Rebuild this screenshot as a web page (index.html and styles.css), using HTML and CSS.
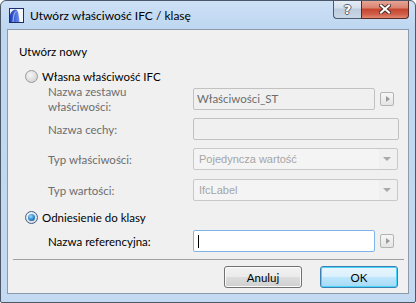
FILE: index.html
```html
<!DOCTYPE html>
<html lang="pl">
<head>
    <meta charset="UTF-8">
    <meta name="viewport" content="width=device-width, initial-scale=1.0">
    <title>Utwórz właściwość IFC / klasę</title>
    <link rel="stylesheet" href="styles.css">
</head>
<body>
    <div class="window">
        <div class="titlebar">
            <svg class="app-icon" width="15" height="15" viewBox="0 0 15 15">
                <defs>
                    <linearGradient id="sail" x1="0" y1="0" x2="1" y2="0">
                        <stop offset="0" stop-color="#1c3fb8"/>
                        <stop offset="1" stop-color="#6f8ff0"/>
                    </linearGradient>
                </defs>
                <rect x="0.5" y="0.5" width="14" height="14" fill="#f4f6fb" stroke="#1d2c6b"/>
                <path d="M1 14 L1 7 Q2.5 1.5 7 1.5 Q9.5 1.8 10.5 14 Z" fill="url(#sail)"/>
                <path d="M4 14 Q4.5 5 7.2 3.2" stroke="#c9d6ff" stroke-width="0.8" fill="none"/>
            </svg>
            <span class="title">Utwórz właściwość IFC / klasę</span>
            <div class="caption-buttons">
                <div class="cap-btn help">?</div>
                <div class="cap-btn close">
                    <svg width="12" height="10" viewBox="0 0 12 10">
                        <path d="M2 1.5 L10 8.5 M10 1.5 L2 8.5" stroke="#4a3030" stroke-width="4" stroke-linecap="square"/>
                        <path d="M2 1.5 L10 8.5 M10 1.5 L2 8.5" stroke="#ffffff" stroke-width="2" stroke-linecap="square"/>
                    </svg>
                </div>
            </div>
        </div>

        <div class="client">
            <div class="group-title">Utwórz nowy</div>

            <div class="radio-row">
                <span class="radio"></span>
                <span>Własna właściwość IFC</span>
            </div>

            <div class="field first">
                <div class="field-label">Nazwa zestawu<br>właściwości:</div>
                <div class="textbox short">Właściwości_ST</div>
                <div class="more-btn"><span class="tri"></span></div>
            </div>

            <div class="field">
                <div class="field-label">Nazwa cechy:</div>
                <div class="textbox wide"></div>
            </div>

            <div class="field">
                <div class="field-label">Typ właściwości:</div>
                <div class="dropdown">
                    <span>Pojedyncza wartość</span>
                    <span class="drop-arrow"></span>
                </div>
            </div>

            <div class="field last">
                <div class="field-label">Typ wartości:</div>
                <div class="dropdown">
                    <span>IfcLabel</span>
                    <span class="drop-arrow"></span>
                </div>
            </div>

            <div class="radio-row second">
                <span class="radio checked"></span>
                <span>Odniesienie do klasy</span>
            </div>

            <div class="field ref">
                <div class="field-label active">Nazwa referencyjna:</div>
                <div class="textbox short focused"><span class="caret"></span></div>
                <div class="more-btn"><span class="tri"></span></div>
            </div>

            <div class="separator"></div>

            <div class="buttons">
                <div class="btn">Anuluj</div>
                <div class="btn default">OK</div>
            </div>
        </div>
    </div>
</body>
</html>
```

FILE: styles.css
```css
body {
    margin: 0;
    background-color: #fff;
    font-family: "Segoe UI", Lato, "Liberation Sans", sans-serif;
    font-size: 11.5px;
    color: #000;
}
.window {
    width: 414px;
    height: 301px;
    border: 1px solid #4c5868;
    border-radius: 6px 6px 2px 2px;
    background: linear-gradient(#cde1f6, #bed6f0 28px, #c4daf2);
    display: flex;
    flex-direction: column;
    overflow: hidden;
}
.titlebar {
    height: 28px;
    display: flex;
    align-items: center;
}
.app-icon {
    margin-left: 8px;
    margin-top: 1px;
}
.title {
    margin-left: 6px;
    font-size: 12px;
    color: #000;
}
.caption-buttons {
    margin-left: auto;
    margin-right: 6px;
    align-self: flex-start;
    margin-top: -1px;
    display: flex;
}
.cap-btn {
    height: 18px;
    border: 1px solid #4a5a6e;
    border-top: none;
    display: flex;
    align-items: center;
    justify-content: center;
}
.help {
    width: 27px;
    border-radius: 0 0 0 4px;
    border-right: none;
    background: linear-gradient(#e8eef6, #d3dfec 45%, #bccbdc 50%, #c9d7e6);
    color: #fff;
    font-family: "DejaVu Sans", sans-serif;
    font-weight: bold;
    font-size: 13px;
    text-shadow: -1px 0 #56606c, 1px 0 #56606c, 0 -1px #56606c, 0 1px #56606c;
}
.close {
    width: 46px;
    border-radius: 0 0 4px 0;
    border-color: #5a2a24;
    background: linear-gradient(#e9a99b, #d9826f 45%, #c7432d 50%, #d0604b 80%, #e08a70);
}

.client {
    margin: 0 6px;
    height: 263px;
    border: 1px solid #8d9aab;
    background-color: #f0f0f0;
}
.group-title {
    margin: 14px 0 0 11px;
    line-height: 16px;
}
.radio-row {
    margin-top: 8px;
    padding-left: 17px;
    height: 16px;
    display: flex;
    align-items: center;
}
.radio-row.second {
    margin-top: 8px;
}
.radio {
    width: 11px;
    height: 11px;
    border: 1px solid #9a9a9a;
    border-radius: 50%;
    margin-right: 4px;
    background: radial-gradient(circle at 40% 35%, #f6f6f6, #dedede 55%, #c9c9c9);
    display: flex;
    align-items: center;
    justify-content: center;
}
.radio.checked {
    border-color: #3f5f86;
    background: radial-gradient(circle at 40% 35%, #fbfbfb, #e3e3e3 60%, #cfcfcf);
}
.radio.checked::after {
    content: "";
    width: 7px;
    height: 7px;
    border-radius: 50%;
    background: radial-gradient(circle at 40% 35%, #9fdcff, #2d8ed6 50%, #0c3f7a);
}

.field {
    margin-top: 8px;
    padding-left: 40px;
    height: 22px;
    display: flex;
    align-items: center;
}
.field.first {
    margin-top: 4px;
}
.field.last {
    margin-top: 9px;
}
.field.ref {
    margin-top: 5px;
}
.field-label {
    width: 145px;
    flex-shrink: 0;
    line-height: 15px;
    color: #6d6d6d;
}
.field-label.active {
    color: #000;
}
.textbox {
    height: 20px;
    border: 1px solid #c2c2c2;
    border-radius: 2px;
    background-color: #f0f0f0;
    padding-left: 3px;
    line-height: 20px;
    color: #6d6d6d;
    box-sizing: content-box;
}
.textbox.short {
    width: 177px;
}
.textbox.wide {
    width: 201px;
}
.textbox.focused {
    background-color: #fff;
    border-color: #7eb4ea;
    display: flex;
    align-items: center;
}
.caret {
    width: 1px;
    height: 13px;
    background-color: #000;
    margin-left: 1px;
}
.more-btn {
    width: 12px;
    height: 12px;
    margin-left: 5px;
    border: 1px solid #b3b3b3;
    border-radius: 2px;
    background: linear-gradient(#f7f7f7, #e4e4e4);
    display: flex;
    align-items: center;
    justify-content: center;
}
.tri {
    width: 0;
    height: 0;
    margin-left: 1px;
    border-top: 3px solid transparent;
    border-bottom: 3px solid transparent;
    border-left: 4px solid #9a9a9a;
}
.dropdown {
    width: 198px;
    height: 20px;
    border: 1px solid #c8c8c8;
    border-radius: 2px;
    background: linear-gradient(90deg, #f4f4f4 185px, #f0f0f0 185px);
    padding-left: 5px;
    display: flex;
    align-items: center;
    font-family: "Liberation Sans", Arial, sans-serif;
    font-size: 11px;
    color: #a5a5a5;
    box-sizing: content-box;
}
.drop-arrow {
    margin-left: auto;
    margin-right: 6px;
    width: 0;
    height: 0;
    border-left: 4px solid transparent;
    border-right: 4px solid transparent;
    border-top: 4px solid #a9a9a9;
}
.separator {
    margin: 7px 4px 0 5px;
    height: 1px;
    background-color: #a0a0a0;
}
.buttons {
    margin-top: 6px;
    padding-right: 10px;
    display: flex;
    justify-content: flex-end;
    gap: 18px;
}
.btn {
    width: 76px;
    height: 20px;
    border: 1px solid #707070;
    border-radius: 3px;
    background: linear-gradient(#f2f2f2, #ebebeb 50%, #dddddd 50%, #cfcfcf);
    box-shadow: inset 0 0 0 1px #fcfcfc;
    display: flex;
    align-items: center;
    justify-content: center;
}
.btn.default {
    border-color: #3c7fb1;
    background: linear-gradient(#eaf6fd, #d9f0fc 50%, #bee6fd 50%, #a7d9f5);
    box-shadow: inset 0 0 0 1px #48d4fb;
}
```
